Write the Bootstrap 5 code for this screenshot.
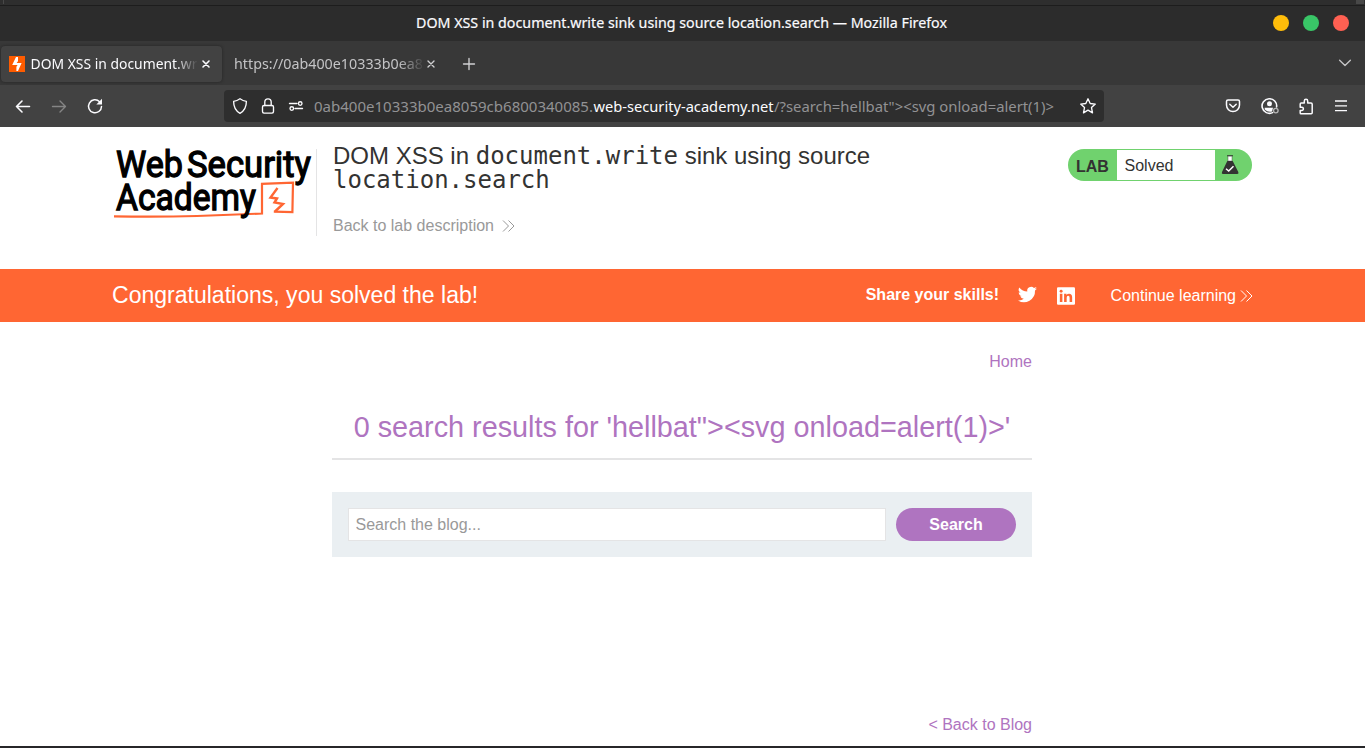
<!DOCTYPE html>
<html lang="en">
<head>
<meta charset="utf-8">
<title>DOM XSS in document.write sink using source location.search</title>
<link rel="stylesheet" href="https://cdn.jsdelivr.net/npm/bootstrap@5.3.0/dist/css/bootstrap.min.css">
<script src="https://cdn.jsdelivr.net/npm/bootstrap@5.3.0/dist/js/bootstrap.bundle.min.js"></script>
<style>
body{height:748px;overflow:hidden;font:16px/20px "Liberation Sans",Arial,sans-serif;color:#333332;background:#fff}
a{text-decoration:none;color:inherit}
svg{display:block;flex:none;overflow:visible}
.chrome{font-family:"Noto Sans","Open Sans",sans-serif;font-size:14.4px;color:#fbfbfe;white-space:nowrap}
.chrome .ico{fill:none;stroke:#fbfbfe;stroke-width:1.35;stroke-linecap:round;stroke-linejoin:round}
.desk-strip{height:6px;background:#2e2e2e;border-bottom:1px solid #1d1d1d;padding:0 1px 0 3px}
.desk-strip i{height:4px;background:#484848}
.title-bar{height:35px;background:#2c2c2c;padding-bottom:1px}
.win-title{left:416px;top:8px;line-height:18px}
.win-btn{width:16px;height:16px}
.tab-bar{height:44px;background:#383838;padding:4px 14px 4px 1px}
.tab-item{height:36px;line-height:36px;padding:0 10px 0 8px}
.tab-on{width:221px;background:#424242;border-radius:4px;box-shadow:0 0 3px #1118}
.tab-off{width:224px;padding-left:12px;color:#c4c4c6}
.tab-text{overflow:hidden;-webkit-mask-image:linear-gradient(90deg,#000 86%,transparent)}
.tool-bar{height:42px;background:#424242;padding:0 16px 0 15px}
.url-bar{width:880px;height:32px;background:#2e2e2e;border-radius:4px;margin-left:121px;padding:0 8px}
.url-text{margin-left:10px}
.page-view{height:619px}
.wrap{width:1141px;margin:0 auto 0 112px}
.lab-head{height:142px;padding-top:22px}
.brand-box{width:205px;height:87px;border-right:1px solid #e4e4e5}
.lab-title{font-size:24px;line-height:24px;margin:-5px 0 24px;font-weight:400}
.lab-title code{font:24px/24px "DejaVu Sans Mono",monospace;color:inherit}
.back-link{color:#999}
.lab-pill{width:184px;height:32px;border-radius:16px;background:#70d26e;padding:1px 0;margin-right:1px}
.lab-pill strong{width:49px;padding:3px 0 0 8px}
.lab-state{width:98px;background:#fff;padding:2px 0 0 7.500px}
.solved-bar{height:53px;background:#f63}
.solved-bar .wrap{height:53px;color:#fff}
.solved-text{font-size:23.04px;line-height:28px;padding-bottom:2px}
.blog{width:700px;margin-left:332px;color:#af74c0}
.blog h1{font-size:28.8px;line-height:34px;font-weight:400;margin:38px 0 0;height:50px;border-bottom:2px solid #e4e4e5}
.find-box{margin-top:32px;height:65px;background:#eaeff2;padding:16px;gap:10px}
.find-box .form-control{height:33px;border:1px solid #e4e4e5;border-radius:0;padding:0 6.500px;font-size:16px;line-height:20px;min-width:0}
.find-box .form-control::placeholder{color:#999;opacity:1}
.find-box .btn{flex:none;width:120px;height:33px;border:0;border-radius:17px;background:#af74c0;color:#fff;font-weight:700;padding:0;font-size:16px}
.base-line{height:2px;background:#272629}
</style>
</head>
<body>
<header class="chrome">
  <div class="desk-strip d-flex justify-content-between"><i style="width:1px"></i><i style="width:8px"></i></div>
  <div class="title-bar position-relative d-flex align-items-center justify-content-end pe-3">
    <svg class="position-absolute win-title" width="531" height="18"><text x="0" y="14" font-size="14.6" fill="#fbfbfe" stroke="#fbfbfe" stroke-width=".2" textLength="531" lengthAdjust="spacingAndGlyphs">DOM XSS in document.write sink using source location.search — Mozilla Firefox</text></svg>
    <div class="d-flex" style="gap:14px"><span class="win-btn rounded-circle" style="background:#ffbd0a"></span><span class="win-btn rounded-circle" style="background:#39c667"></span><span class="win-btn rounded-circle" style="background:#ff6052"></span></div>
  </div>
  <div class="tab-bar d-flex align-items-center">
    <div class="tab-item tab-on d-flex align-items-center" style="margin-top:1px">
      <svg width="16" height="16" class="me-1"><path fill="#ff5c00" d="M0 0h16v16H0z"/><path fill="#fff" d="M7 1h2v4.200L7.600 7h5L9 15H7.400v-4.300l1.200-1.800H3.200z"/></svg>
      <div class="tab-text" style="width:169px"><svg width="169" height="36"><text x="1.500" y="23" font-size="15" fill="#fbfbfe" textLength="167" lengthAdjust="spacingAndGlyphs">DOM XSS in document.wr</text></svg></div>
      <svg class="ico" width="8" height="8" style="margin-left:3.500px"><path stroke-width="1.600" d="M1 1l6 6M7 1L1 7"/></svg>
    </div>
    <div class="tab-item tab-off d-flex align-items-center" style="margin-top:1px">
      <div class="tab-text" style="width:191px"><svg width="191" height="36"><text x="0" y="23" font-size="15" fill="#c4c4c6" textLength="189" lengthAdjust="spacingAndGlyphs">https://0ab400e10333b0ea8</text></svg></div>
      <svg class="ico" width="8" height="8" style="margin-left:2px"><path stroke="#d0d0d2" d="M1 1l6 6M7 1L1 7"/></svg>
    </div>
    <svg class="ico" width="12" height="12" style="margin-left:16.500px;margin-top:1px"><path stroke="#d0d0d2" d="M6 .5v11M.5 6h11"/></svg>
    <svg class="ico ms-auto" width="12" height="8"><path d="M.6 1.200L6 6.600l5.400-5.400" stroke="#c5c5c6"/></svg>
  </div>
  <div class="tool-bar d-flex align-items-center">
    <svg class="ico" width="16" height="16"><path stroke-width="1.600" d="M14.500 8.500H1.500M7 3L1.500 8.500 7 14"/></svg>
    <svg class="ico" width="16" height="16" style="margin-left:20px"><path stroke="#858585" d="M1.500 8.500h13M9 3l5.500 5.500L9 14"/></svg>
    <svg class="ico" width="16" height="16" style="margin-left:20px"><path stroke-width="1.500" d="M12.600 3.700A6.500 6.500 0 1 0 14.500 8.400"/><path fill="#fbfbfe" stroke="none" d="M15 .8v5.700H9.300z"/></svg>
    <div class="url-bar d-flex align-items-center">
      <svg class="ico" width="16" height="16"><path d="M8 .8c2 1.500 4.200 2.300 6.400 2.500 0 5.400-1.500 9.400-6.400 12C3.100 12.700 1.600 8.700 1.600 3.300 3.800 3.100 6 2.300 8 .8z"/></svg>
      <svg class="ico" width="16" height="16" style="margin-left:12px"><rect x="2.500" y="7.500" width="11" height="7.600" rx="1.500"/><path d="M4.800 7.500V4a3.200 3.200 0 0 1 6.400 0v3.500"/></svg>
      <svg class="ico" width="16" height="16" style="margin-left:12px"><path d="M1.500 5.500h7.500M7 10.500h7.500"/><circle cx="12.200" cy="5.500" r="1.800"/><circle cx="3.800" cy="10.500" r="1.800"/></svg>
      <svg class="url-text" width="740" height="24"><g font-size="15" fill="#929294"><text x="0" y="18" textLength="279" lengthAdjust="spacingAndGlyphs">0ab400e10333b0ea8059cb6800340085.</text><text x="279.500" y="18" fill="#fbfbfe" textLength="180" lengthAdjust="spacingAndGlyphs">web-security-academy.net</text><text x="460" y="18" textLength="280" lengthAdjust="spacingAndGlyphs">/?search=hellbat"&gt;&lt;svg onload=alert(1)&gt;</text></g></svg>
      <svg class="ico ms-auto" width="16" height="16"><path d="M8 .8l2.200 4.700 5.100.6-3.800 3.500 1 5.200L8 12.200l-4.500 2.600 1-5.200L.7 6.100l5.100-.6z"/></svg>
    </div>
    <svg class="ico ms-auto" width="16" height="16"><path stroke-width="1.500" d="M3 2h10q1.500 0 1.500 1.500v3.600a6.500 6.500 0 0 1-13 0V3.500Q1.500 2 3 2z"/><path stroke-width="1.500" d="M4.800 6.200L8 9.200l3.200-3"/></svg>
    <svg class="ico" width="18" height="18" style="margin-left:20px"><path stroke-width="1.600" d="M11.500 15.600A7.300 7.300 0 1 1 15.600 10"/><circle cx="8.500" cy="6.700" r="2.500" fill="#fbfbfe" stroke="none"/><path fill="#fbfbfe" stroke="none" d="M3.700 10.800h8.300L11 14.500q-4 1-7.300-2z"/><circle cx="14.800" cy="13.600" r="2.300" stroke="#b4b4b4"/></svg>
    <svg class="ico" width="16" height="17" style="margin-left:18.500px"><path stroke-width="1.500" d="M3.200 5h3.100V3a1.700 1.700 0 0 1 3.400 0v2H13q1.200 0 1.200 1.200v8.600q0 .9-.9.900H3q-.8 0-.8-.8v-2.500h1.600a1.600 1.600 0 0 0 0-3.200H2.200V6q0-1 1-1z"/></svg>
    <svg class="ico" width="12" height="12" style="margin-left:21.500px;margin-right:2px"><path stroke-linecap="butt" d="M0 1h12M0 5.800h12M0 10.600h12"/></svg>
  </div>
</header>
<main class="page-view">
  <section class="wrap lab-head d-flex align-items-start">
    <div class="brand-box">
      <svg width="204" height="75" font-family="Roboto,sans-serif" font-weight="400" fill="#000">
        <g fill="none" stroke="#f63" stroke-width="2.200"><path d="M2 67.300Q45 68 85 67l65-2.500V34.800l31-1.200-.6 29.600-18.600-.5"/><path stroke-width="2.400" d="M165.500 39l-7 9.500 6.500 1-2.500 4 8.500 1.500-8 7.500"/></g>
        <g stroke="#000" stroke-width="1.300"><text x="4" y="28.200" font-size="37" textLength="67" lengthAdjust="spacingAndGlyphs">Web</text><text x="75" y="28.200" font-size="37" textLength="124" lengthAdjust="spacingAndGlyphs">Security</text>
        <text x="4" y="60.700" font-size="36" textLength="140" lengthAdjust="spacingAndGlyphs">Academy</text></g>
      </svg>
    </div>
    <div style="width:600px;margin-left:16px">
      <h2 class="lab-title">DOM XSS in <code>document.write</code> sink using source <code>location.search</code></h2>
      <a href="#" class="back-link d-inline-flex align-items-center">Back to lab description <svg width="13" height="12" style="margin-left:8px"><path fill="none" stroke="#999" d="M1 .5L6.500 6 1 11.500M6.500.5L12 6l-5.500 5.500"/></svg></a>
    </div>
    <div class="lab-pill d-flex ms-auto">
      <strong class="d-flex align-items-center">LAB</strong>
      <span class="lab-state d-flex align-items-center">Solved</span>
      <svg width="18" height="22" style="margin:5px 0 0 6px"><path fill="#333332" d="M6 .2h6v1H6zM6.300 6h5.400l5.600 11q.8 2-1 2H2q-1.800 0-1-2z"/><path fill="#fff" stroke="#333332" stroke-width=".4" d="M7 1.200h4V6H7z"/><path fill="none" stroke="#fff" stroke-width="1.500" d="M5 13.700l2.700 2.300 4.800-4.800"/></svg>
    </div>
  </section>
  <section class="solved-bar">
    <div class="wrap d-flex align-items-center">
      <span class="solved-text">Congratulations, you solved the lab!</span>
      <strong class="ms-auto" style="padding-bottom:2px">Share your skills!</strong>
      <svg width="19" height="18" viewBox="1 2 22 20" style="margin:0 1px 2px 18.500px"><path fill="#fff" d="M23 4.600a9 9 0 0 1-2.600.7 4.500 4.500 0 0 0 2-2.500 9 9 0 0 1-2.900 1.100 4.500 4.500 0 0 0-7.700 4.100A12.800 12.800 0 0 1 2.500 3.300a4.500 4.500 0 0 0 1.400 6 4.500 4.500 0 0 1-2-.6 4.500 4.500 0 0 0 3.600 4.500 4.500 4.500 0 0 1-2 .1 4.500 4.500 0 0 0 4.200 3.100A9 9 0 0 1 1 18.300a12.800 12.800 0 0 0 19.700-11.400A9 9 0 0 0 23 4.600z"/></svg>
      <svg width="18" height="18" viewBox="0 .5 19 18.500" style="margin-left:19.500px;margin-right:1px"><rect width="19" height="18.500" y=".5" rx="1.200" fill="#fff"/><path fill="#f63" d="M3 7.500h2.700v8.700H3zM7.500 7.500H10v1.200q.9-1.400 2.700-1.400 3.300 0 3.300 3.800v5.100h-2.700v-4.500q0-2.100-1.500-2.100-1.600 0-1.600 2.100v4.500H7.500z"/><circle cx="4.350" cy="4.800" r="1.550" fill="#f63"/></svg>
      <a href="#" class="d-flex align-items-center" style="margin-left:34.500px">Continue learning <svg width="13" height="12" style="margin-left:4px"><path fill="none" stroke="#fff" d="M1 .5L6.500 6 1 11.500M6.500.5L12 6l-5.500 5.500"/></svg></a>
    </div>
  </section>
  <section class="blog">
    <nav class="text-end" style="padding-top:30px"><a href="#">Home</a></nav>
    <h1 class="text-center">0 search results for 'hellbat"&gt;&lt;svg onload=alert(1)&gt;'</h1>
    <form class="find-box d-flex"><input class="form-control" type="text" placeholder="Search the blog..."><button class="btn" type="button">Search</button></form>
    <div class="text-end" style="margin-top:158px"><a href="#">&lt; Back to Blog</a></div>
  </section>
</main>
<footer class="base-line"></footer>
</body>
</html>
